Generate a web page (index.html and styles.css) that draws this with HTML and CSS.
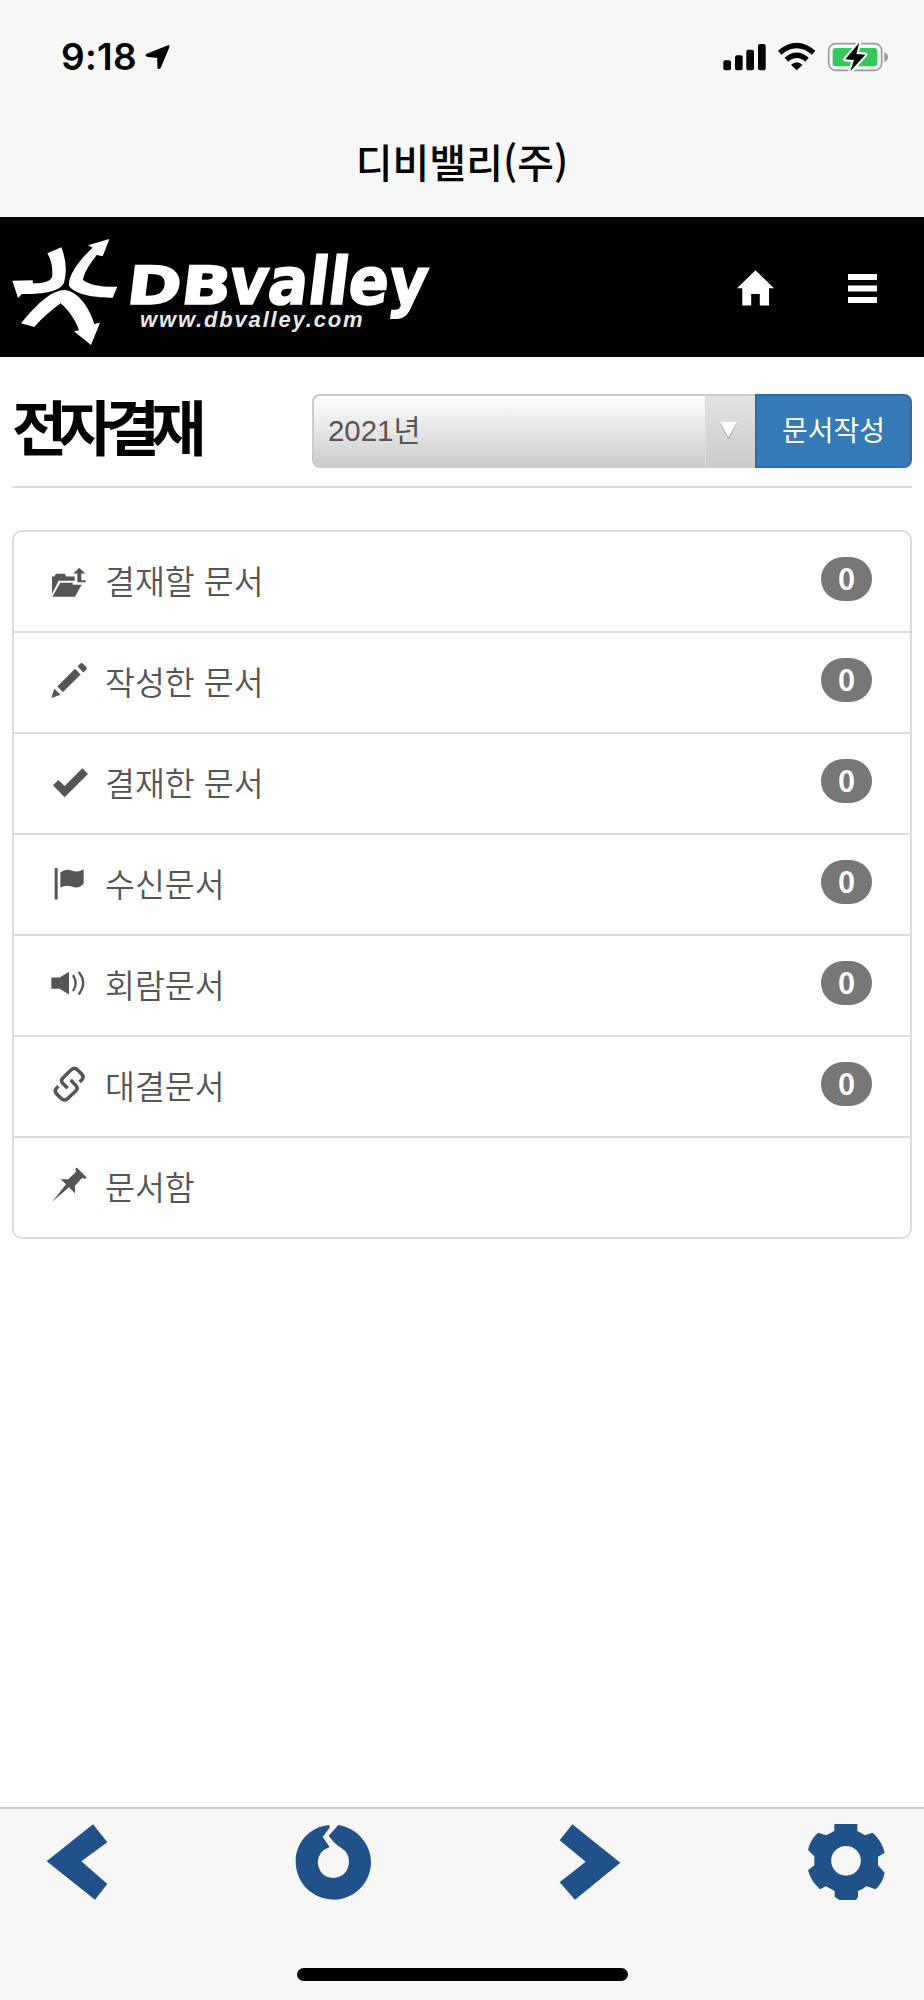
FILE: index.html
```html
<!DOCTYPE html>
<html lang="ko">
<head>
    <meta charset="UTF-8">
    <meta name="viewport" content="width=device-width, initial-scale=1.0">
    <title>전자결재</title>
    <link rel="stylesheet" href="styles.css">
</head>
<body>
    <div class="status-bar">
        <span class="time">9:18</span>
        <svg class="location" viewBox="436 130 76 78"><path d="M506 133Q512 132 510 139L484 202Q479 209 474 203L473 172L442 168Q434 164 441 159Z"/></svg>
        <svg class="status-icons" viewBox="785 125 498 90">
            <!-- signal -->
            <rect x="786" y="180" width="23" height="30" rx="6"/>
            <rect x="821" y="165" width="23" height="45" rx="6"/>
            <rect x="855" y="148" width="23" height="62" rx="6"/>
            <rect x="890" y="131" width="23" height="79" rx="6"/>
            <!-- wifi -->
            <path d="M955 157Q1006 114 1057 157M975 178Q1006 151 1037 178" fill="none" stroke="#000" stroke-width="16"/>
            <path d="M989 193Q1006 178 1024 193L1006 210Z"/>
            <!-- battery -->
            <rect x="1102" y="130" width="159" height="80" rx="21" fill="none" stroke="#9c9c9c" stroke-width="5"/>
            <path d="M1269 156Q1280 159 1280 170Q1280 181 1269 185Z" fill="#9c9c9c"/>
            <rect x="1114" y="143" width="134" height="55" rx="10" fill="#34c759"/>
            <path d="M1194 127L1152 177L1178 179L1167 213L1212 163L1185 161Z" stroke="#f7f7f7" stroke-width="13" stroke-linejoin="round"/>
            <path d="M1194 127L1152 177L1178 179L1167 213L1212 163L1185 161Z"/>
        </svg>
    </div>
    <div class="app-title">디비밸리(주)</div>

    <header class="navbar">
        <svg class="logo" viewBox="0 21 1386 420">
            <path d="M142 130L184 112Q206 168 192 218C180 248 115 252 66 252L54 264L37 212L98 211L99 220C135 220 155 214 157 195Q158 155 142 130Z"/>
            <path d="M328 87L264 106L278 113C245 142 203 195 207 227C225 255 290 263 338 263L352 230C310 232 270 226 249 210C252 185 275 155 290 135L308 139Z"/>
            <path d="M63 340C105 290 150 240 195 240C240 246 270 300 283 342L300 338L273 405L222 364L237 361C226 328 205 300 182 280C155 300 125 325 103 351Z"/>
            <g class="logo-name" transform="translate(0 282) skewX(-7)">
                <text x="376" y="0" font-size="158" textLength="312" lengthAdjust="spacingAndGlyphs">DB</text>
                <text x="682" y="0" font-size="196" textLength="594" lengthAdjust="spacingAndGlyphs">valley</text>
            </g>
            <text class="logo-url" x="420" y="350" textLength="668">www.dbvalley.com</text>
        </svg>
        <svg class="home" viewBox="110 180 112 108"><path d="M166 180L222 235H207V287H179V252H153V287H126V235H110Z"/></svg>
        <svg class="menu" viewBox="443 191 88 88"><path d="M443 191h88v18h-88zM443 226h88v18h-88zM443 261h88v18h-88z"/></svg>
    </header>

    <main class="content">
        <div class="page-header">
            <h1>전자결재</h1>
            <div class="select">
                <span class="select-text">2021년</span>
                <span class="select-arrow"><svg viewBox="0 0 56 56"><path d="M2 6H54L28 54Z" fill="#aaa"/><path d="M2 2H54L28 48Z" fill="#fff"/></svg></span>
            </div>
            <button class="write">문서작성</button>
        </div>

        <ul class="list">
            <li>
                <svg viewBox="153 580.5 108 108"><path d="M156 670V618H163L168 610H194L199 618H224V631H176ZM181 637H218V643H245L225 679H157ZM238 592L256 609H244V629H257V635H232V609H220Z"/></svg>
                <span class="label">결재할 문서</span><span class="badge">0</span>
            </li>
            <li>
                <svg viewBox="153 133.8 108 108"><path d="M154 233L163 205L182 223ZM172 198L225 145L242 162L189 215ZM233 138L241 129Q245 126 249 130L259 140Q262 144 259 148L250 156Z"/></svg>
                <span class="label">작성한 문서</span><span class="badge">0</span>
            </li>
            <li>
                <svg viewBox="153 437 108 108"><path d="M159 495L175 479L194 497L247 444L264 461L194 531Z"/></svg>
                <span class="label">결재한 문서</span><span class="badge">0</span>
            </li>
            <li>
                <svg viewBox="153 740.5 108 108"><path d="M164 745Q168 741 173 745V838H164ZM181 757Q195 744 215 751Q234 758 251 747V790Q238 808 215 799Q196 794 181 802Z"/></svg>
                <span class="label">수신문서</span><span class="badge">0</span>
            </li>
            <li>
                <svg viewBox="153 113.7 108 108"><path d="M154 142H179L207 125V193L179 176H154Z"/><path d="M219 135Q235 159 219 183M236 126Q263 159 236 193" fill="none" stroke="#555" stroke-width="7"/></svg>
                <span class="label">회람문서</span><span class="badge">0</span>
            </li>
            <li>
                <svg viewBox="153 417 108 108"><path d="M203 475L188 460Q181 452 188 445L212 421Q222 410 232 419L245 432Q253 441 246 449L239 456M212 450L228 467Q235 475 228 482L204 505Q193 515 183 505L170 492Q162 483 169 475L175 469" fill="none" stroke="#555" stroke-width="10.5"/></svg>
                <span class="label">대결문서</span><span class="badge">0</span>
            </li>
            <li>
                <svg viewBox="153 720.4 108 108"><path d="M230 713L260 743Q255 750 247 744L225 768V790L207 772L157 816L198 763L182 748H205L229 725Q223 718 230 713Z"/></svg>
                <span class="label">문서함</span>
            </li>
        </ul>
    </main>

    <footer class="toolbar">
        <div class="tools">
            <svg viewBox="118 102 228 228"><path d="M280 103L323 157L245 214L323 282L286 329L141 214Z"/></svg>
            <svg viewBox="886 102 228 228"><path d="M989 105L990 113L969 141L990 171Q955 184 954 217Q960 263 1000 264Q1045 260 1048 215Q1048 188 1025 174Q1003 160 987 137L1016 105C1072 114 1114 162 1114 216C1114 281 1061 329 1003 329C936 328 888 277 888 214C888 158 930 110 989 105Z"/></svg>
            <svg viewBox="270 102 228 228"><path d="M331 103L475 218L339 329L293 277L371 215L293 151Z"/></svg>
            <svg viewBox="1038 102 228 228"><path fill-rule="evenodd" d="M1117 102H1186V123Q1198 128 1209 136L1232 128Q1260 153 1268 188L1248 200V226L1268 248Q1262 278 1241 298L1213 289Q1200 300 1188 303V320L1182 330H1132L1118 320V303Q1104 296 1092 289L1074 298Q1047 274 1038 241L1057 226V199L1038 180Q1044 150 1068 128L1092 136Q1104 131 1117 122ZM1152 168A44 44 0 1 0 1152 257A44 44 0 1 0 1152 168Z"/></svg>
        </div>
        <div class="home-indicator"></div>
    </footer>
</body>
</html>
```
FILE: styles.css
```css
* {
    box-sizing: border-box;
}

body {
    margin: 0;
    height: 2000px;
    display: flex;
    flex-direction: column;
    background-color: #fff;
    font-family: "Noto Sans CJK KR", sans-serif;
}

svg {
    display: block;
    flex: none;
    overflow: visible;
}

.status-bar {
    height: 113px;
    padding: 0 35px 0 61px;
    display: flex;
    align-items: center;
    background-color: #f7f7f7;
}

.time {
    font-family: Inter, sans-serif;
    font-size: 37px;
    font-weight: 600;
    width: 84px;
    letter-spacing: 0.3px;
}

.location {
    width: 25px;
    height: 26px;
}

.status-icons {
    width: 166px;
    height: 30px;
    margin-left: auto;
}

.app-title {
    height: 104px;
    line-height: 96px;
    text-align: center;
    font-size: 40px;
    font-weight: 500;
    color: #000;
    background-color: #f7f7f7;
}

.navbar {
    height: 140px;
    display: flex;
    align-items: center;
    background-color: #000;
}

.navbar svg {
    fill: #fff;
}

.logo {
    width: 462px;
    height: 140px;
}

.logo-name {
    font-family: "DejaVu Sans", sans-serif;
    font-weight: bold;
    stroke: #fff;
    stroke-width: 5px;
}

.logo-url {
    font-family: "Liberation Sans", sans-serif;
    font-size: 66px;
    font-weight: bold;
    font-style: italic;
    fill: #e8e8e8;
}

.home {
    width: 37px;
    height: 36px;
    margin: 2px 0 0 275px;
}

.menu {
    width: 29px;
    height: 29px;
    margin: 2px 0 0 74px;
}

.content {
    flex: 1;
    padding: 0 12px;
}

.page-header {
    height: 131px;
    padding-top: 37px;
    display: flex;
    border-bottom: 2px solid #ddd;
}

h1 {
    margin: 0;
    width: 300px;
    font-size: 60px;
    line-height: 62px;
    font-weight: 700;
    letter-spacing: -8.8px;
}

.select {
    width: 443px;
    height: 74px;
    display: flex;
    border: 2px solid #ccc;
    border-right: none;
    border-radius: 8px 0 0 8px;
    background: linear-gradient(#fff, #ccc);
    overflow: hidden;
}

.select-text {
    flex: 1;
    padding-left: 14px;
    font-family: "Liberation Sans", "Noto Sans CJK KR", sans-serif;
    font-size: 29.4px;
    line-height: 70px;
    color: #555;
}

.select-arrow {
    width: 50px;
    padding: 25px 0 0 13px;
    border-left: 1px solid #ddd;
    background: linear-gradient(#e2e2e2, #ccc);
}

.select-arrow svg {
    width: 19px;
    height: 19px;
}

.write {
    width: 157px;
    height: 74px;
    padding: 0 0 5px;
    border: 2px solid #2e6da4;
    border-radius: 0 8px 8px 0;
    background-color: #337ab7;
    color: #fff;
    font-family: inherit;
    font-size: 28px;
}

.list {
    margin: 42px 0 0;
    padding: 0;
    list-style: none;
    border: 2px solid #ddd;
    border-radius: 10px;
}

.list li {
    height: 101px;
    padding: 0 38px 0 37px;
    display: flex;
    align-items: center;
    border-bottom: 2px solid #ddd;
    color: #555;
    font-size: 32.5px;
}

.list li:last-child {
    height: 99px;
    border-bottom: none;
}

.list svg {
    width: 36px;
    height: 36px;
    fill: #555;
}

.label {
    margin-left: 18px;
    padding-bottom: 5px;
    font-weight: 350;
}

.badge {
    width: 51px;
    height: 44px;
    margin: 0 0 6px auto;
    border-radius: 22px;
    background-color: #777;
    color: #fff;
    font-size: 29px;
    font-weight: 700;
    line-height: 40px;
    text-align: center;
}

.toolbar {
    height: 193px;
    border-top: 2px solid #ccc;
    background-color: #f7f7f7;
}

.tools {
    padding: 15px 40px 0 39px;
    display: flex;
    justify-content: space-between;
}

.tools svg {
    width: 76px;
    height: 76px;
    fill: #205289;
}

.home-indicator {
    width: 331px;
    height: 13px;
    margin: 68px auto 0;
    border-radius: 7px;
    background-color: #000;
}
```
